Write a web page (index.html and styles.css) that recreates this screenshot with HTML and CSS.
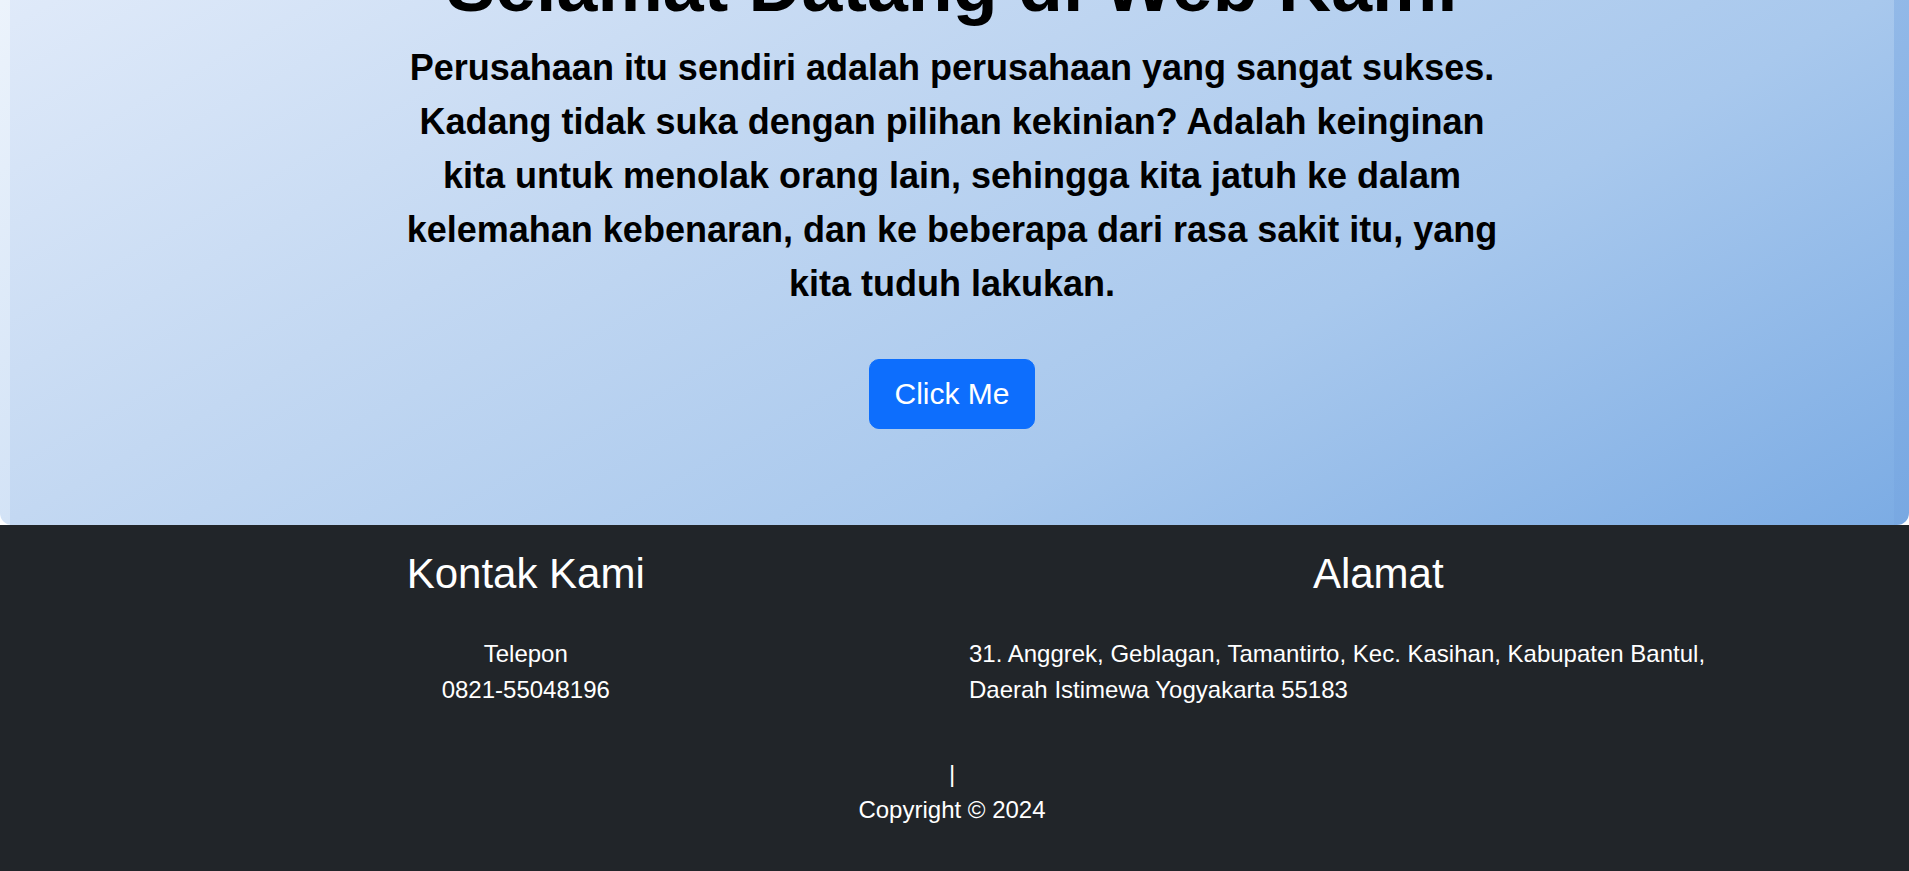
FILE: index.html
```html
<!DOCTYPE html>
<html lang="id">
<head>
<meta charset="utf-8">
<title>Selamat Datang di Web Kami</title>
<link rel="stylesheet" href="styles.css">
</head>
<body>
<section class="hero">
  <div class="hero-inner">
    <h1 class="hero-title">Selamat Datang di Web Kami</h1>
    <p class="hero-text">Perusahaan itu sendiri adalah perusahaan yang sangat sukses. Kadang tidak suka dengan pilihan kekinian? Adalah keinginan kita untuk menolak orang lain, sehingga kita jatuh ke dalam kelemahan kebenaran, dan ke beberapa dari rasa sakit itu, yang kita tuduh lakukan.</p>
    <button class="hero-btn" type="button">Click Me</button>
  </div>
</section>
<footer class="footer">
  <div class="footer-row">
    <div class="footer-col footer-col--center">
      <h2 class="footer-title">Kontak Kami</h2>
      <p class="footer-text">Telepon<br>0821-55048196</p>
    </div>
    <div class="footer-col">
      <h2 class="footer-title">Alamat</h2>
      <p class="footer-text">31. Anggrek, Geblagan, Tamantirto, Kec. Kasihan, Kabupaten Bantul,<br>Daerah Istimewa Yogyakarta 55183</p>
    </div>
  </div>
  <p class="copyright">|<br>Copyright &copy; 2024</p>
</footer>
<script src="script.js"></script>
</body>
</html>
```

FILE: styles.css
```css
html, body {
  margin: 0;
  padding: 0;
}

body {
  background: #ffffff;
  font-family: "Liberation Sans", Arial, sans-serif;
  color: #000000;
}

.hero {
  background: linear-gradient(135deg, #f2f7fd 0%, #78a8e2 100%);
  border-radius: 12px;
  padding: 0 15px 0 10px;
}

.hero-inner {
  background: linear-gradient(151deg, #e6eefb 0%, #c3d8f2 38%, #a8c8ed 68.5%, #7cace4 100%);
  padding: 64px 24px 96px;
  display: flex;
  flex-direction: column;
  align-items: center;
  text-align: center;
}

.hero-title {
  font-size: 73.5px;
  font-weight: 700;
  line-height: 1.2;
  margin: 0 0 11px;
}

.hero-text {
  font-size: 36px;
  font-weight: 700;
  line-height: 1.5;
  max-width: 1110px;
  margin: 0 0 48px;
}

.hero-btn {
  font-family: inherit;
  font-size: 30px;
  line-height: 44px;
  padding: 12px 24px;
  border: 1px solid #0d6efd;
  border-radius: 10px;
  background: #0d6efd;
  color: #ffffff;
  cursor: pointer;
}

.footer {
  background: #212529;
  color: #ffffff;
  padding: 24px 15px 43px 10px;
}

.footer-row {
  width: 90.5%;
  margin: 0 auto;
  display: flex;
}

.footer-col {
  flex: 1 1 0;
  padding: 0 17px;
}

.footer-col--center {
  text-align: center;
}

.footer-title {
  font-size: 42px;
  font-weight: 400;
  line-height: 1.2;
  margin: 0 0 36px;
  text-align: center;
}

.footer-text {
  font-size: 24px;
  line-height: 1.5;
  margin: 0;
}

.copyright {
  font-size: 24px;
  line-height: 1.5;
  text-align: center;
  margin: 48px 0 0;
}
```

FILE: script.js
```js
function scrollToBottom() {
  window.scrollTo(0, document.documentElement.scrollHeight);
}
scrollToBottom();
window.addEventListener('load', scrollToBottom);
```
